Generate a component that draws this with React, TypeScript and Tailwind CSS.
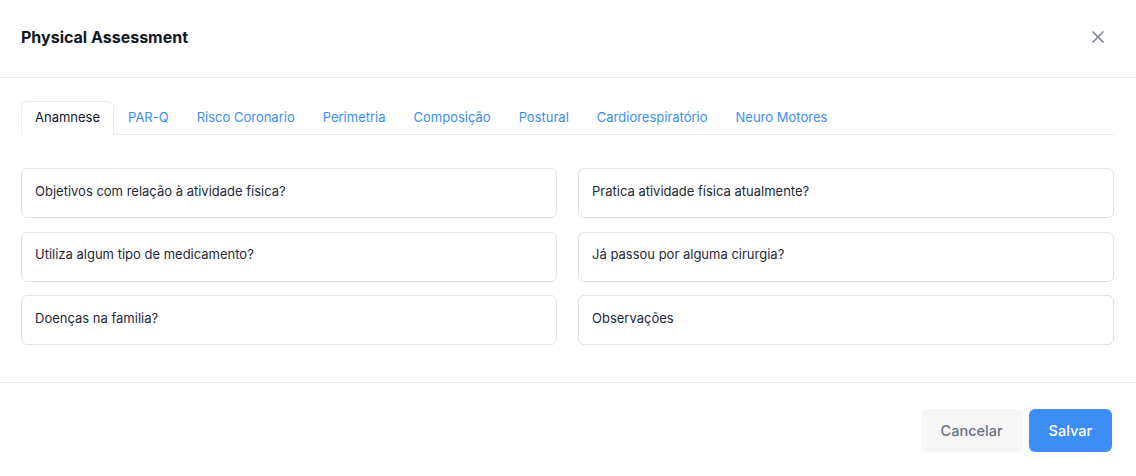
import React from "react";

const tabs = [
  "Anamnese",
  "PAR-Q",
  "Risco Coronario",
  "Perimetria",
  "Composição",
  "Postural",
  "Cardiorespiratório",
  "Neuro Motores",
];

const fields = [
  "Objetivos com relação à atividade física?",
  "Pratica atividade física atualmente?",
  "Utiliza algum tipo de medicamento?",
  "Já passou por alguma cirurgia?",
  "Doenças na familia?",
  "Observações",
];

export default function App() {
  return (
    <div
      className="w-[1136px] h-[476px] bg-white flex flex-col text-[#1f2937]"
      style={{ fontFamily: "Inter, 'Noto Sans', sans-serif" }}
    >
      <div className="h-[78px] shrink-0 flex items-center justify-between pl-[21px] pr-[31px] border-b border-[#ebecef]">
        <h2 className="text-[16px] font-bold text-[#111827] leading-6 -mt-[3px]">Physical Assessment</h2>
        <svg width="14" height="14" viewBox="0 0 14 14" className="-mt-[3px]">
          <path d="M2 2 L12 12 M12 2 L2 12" stroke="#7d859b" strokeWidth="1.7" strokeLinecap="round" />
        </svg>
      </div>

      <div className="pt-[23px] pl-[21px] pr-[22px]">
        <div className="flex border-b border-[#ebecef]">
          {tabs.map((t, i) => (
            <div
              key={t}
              className={
                i === 0
                  ? "px-[13px] pt-[5px] pb-[6px] text-[13px] leading-5 border border-[#ebecef] border-b-white -mb-px rounded-t-md bg-white text-[#111827]"
                  : "px-[13px] pt-[5px] pb-[6px] text-[13px] leading-5 border border-transparent text-[#3c8ef6]"
              }
            >
              {t}
            </div>
          ))}
        </div>
      </div>

      <div className="pt-[33px] pl-[21px] pr-[22px] grid grid-cols-2 gap-x-[21px] gap-y-[13.5px]">
        {fields.map((f) => (
          <div
            key={f}
            className="h-[50px] border border-[#dfe1e8] rounded-md px-[13px] flex items-center text-[13px] text-[#1f2937] pb-[3px]"
          >
            {f}
          </div>
        ))}
      </div>

      <div className="mt-[37px] border-t border-[#ebecef] flex justify-end items-start pt-[26px] pr-[24px] gap-[6px]">
        <button className="h-[43px] px-5 rounded-md bg-[#f6f6f7] text-[#6b7280] text-[14.5px] font-medium">
          Cancelar
        </button>
        <button className="h-[43px] px-5 rounded-md bg-[#3c8ef6] text-white text-[14.5px] font-medium">
          Salvar
        </button>
      </div>
    </div>
  );
}
